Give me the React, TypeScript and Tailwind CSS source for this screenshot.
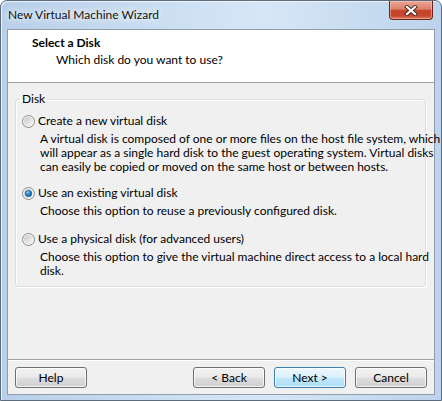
import React from "react";

function Radio({ checked }: { checked?: boolean }) {
  return (
    <svg width="13" height="13" viewBox="0 0 13 13" className="shrink-0">
      <defs>
        <linearGradient id={checked ? "rgA" : "rgB"} x1="0" y1="0" x2="1" y2="1">
          <stop offset="0" stopColor="#c9c9c9" />
          <stop offset="1" stopColor="#f7f7f7" />
        </linearGradient>
        <radialGradient id="dot" cx="0.4" cy="0.35" r="0.7">
          <stop offset="0" stopColor="#8fd3fb" />
          <stop offset="0.45" stopColor="#2a83cf" />
          <stop offset="1" stopColor="#0b4e92" />
        </radialGradient>
      </defs>
      <circle cx="6.5" cy="6.5" r="6" fill="#f4f4f4" stroke="#8b8b8b" strokeWidth="1" />
      <circle cx="6.5" cy="6.5" r="4.5" fill={`url(#${checked ? "rgA" : "rgB"})`} />
      {checked && <circle cx="6.5" cy="6.5" r="3.3" fill="url(#dot)" stroke="#1a5d9a" strokeWidth="0.5" />}
    </svg>
  );
}

function Btn({ children, primary }: { children: React.ReactNode; primary?: boolean }) {
  return (
    <div
      className={
        "w-[72px] h-[21px] rounded-[3px] border flex items-center justify-center text-[12px] leading-none text-black shadow-[inset_0_0_0_1px_rgba(255,255,255,0.75)] " +
        (primary
          ? "border-[#3c7fb1] bg-[linear-gradient(180deg,#ecf7fd_0%,#dcf1fc_48%,#c2e8fb_52%,#aedff8_100%)]"
          : "border-[#707070] bg-[linear-gradient(180deg,#f2f2f2_0%,#ebebeb_48%,#dddddd_52%,#cfcfcf_100%)]")
      }
    >
      {children}
    </div>
  );
}

export default function App() {
  return (
    <div
      className="w-[442px] h-[401px] flex flex-col rounded-t-[7px] border border-[#5d6c7c] bg-[linear-gradient(90deg,#b7cfe9_0%,#cfe1f4_45%,#d6e6f6_60%,#bcd3ec_100%)] shadow-[inset_1px_1px_0_rgba(255,255,255,0.7)] text-[12px] leading-[14px] text-black"
      style={{ fontFamily: '"Segoe UI", Lato, "Liberation Sans", sans-serif' }}
    >
      <div className="h-[28px] flex items-start shrink-0">
        <div className="ml-[7px] mt-[7px] text-[#111] [text-shadow:0_0_6px_#ffffff,0_0_10px_#ffffff]">
          New Virtual Machine Wizard
        </div>
        <div className="ml-auto mr-[8px] w-[44px] h-[19px] rounded-b-[4px] border border-t-0 border-[#6a261a] bg-[linear-gradient(180deg,#eaa797_0%,#dc8068_45%,#c6462b_52%,#c5452a_80%,#dc7a5e_100%)] shadow-[inset_0_0_0_1px_rgba(255,200,190,0.5)] flex items-center justify-center">
          <svg width="14" height="11" viewBox="0 0 14 11">
            <path d="M3 2 L11 9 M11 2 L3 9" stroke="#4a2a24" strokeWidth="4" strokeLinecap="square" />
            <path d="M3 2 L11 9 M11 2 L3 9" stroke="#ffffff" strokeWidth="2.2" strokeLinecap="square" />
          </svg>
        </div>
      </div>

      <div className="flex-1 mx-[6px] mb-[5px] border border-[#8f9cab] bg-[#f0f0f0] flex flex-col">
        <div className="h-[53px] shrink-0 bg-white border-b border-[#a0a0a0] pt-[6px]">
          <div className="pl-[24px] font-bold">Select a Disk</div>
          <div className="pl-[48px] mt-[3px]">Which disk do you want to use?</div>
        </div>

        <div className="flex-1 pl-[7px] pr-[8px]">
          <fieldset className="min-w-0 mt-[9px] border border-[#d5dfe5] rounded-[3px] pl-[6px] pb-[8px] shadow-[inset_1px_1px_0_#ffffff,1px_1px_0_#ffffff]">
            <legend className="ml-[-2px] px-[2px] leading-[14px]">Disk</legend>

            <div className="mt-[7px] h-[16px] flex items-center gap-[3px]">
              <Radio />
              <span>Create a new virtual disk</span>
            </div>
            <div className="mt-[3px] pl-[18px] whitespace-nowrap">
              A virtual disk is composed of one or more files on the host file system, which
              <br />
              will appear as a single hard disk to the guest operating system. Virtual disks
              <br />
              can easily be copied or moved on the same host or between hosts.
            </div>

            <div className="mt-[11px] h-[16px] flex items-center gap-[3px]">
              <Radio checked />
              <span>Use an existing virtual disk</span>
            </div>
            <div className="mt-[3px] pl-[18px] whitespace-nowrap">
              Choose this option to reuse a previously configured disk.
            </div>

            <div className="mt-[13px] h-[16px] flex items-center gap-[3px]">
              <Radio />
              <span>Use a physical disk (for advanced users)</span>
            </div>
            <div className="mt-[3px] pl-[18px] whitespace-nowrap">
              Choose this option to give the virtual machine direct access to a local hard
              <br />
              disk.
            </div>
          </fieldset>
        </div>

        <div className="shrink-0 border-t border-[#a0a0a0] shadow-[inset_0_1px_0_#ffffff] pt-[7px] pb-[6px] px-[7px] flex gap-[9px]">
          <Btn>Help</Btn>
          <div className="ml-auto" />
          <Btn>&lt; Back</Btn>
          <Btn primary>Next &gt;</Btn>
          <Btn>Cancel</Btn>
        </div>
      </div>
    </div>
  );
}
